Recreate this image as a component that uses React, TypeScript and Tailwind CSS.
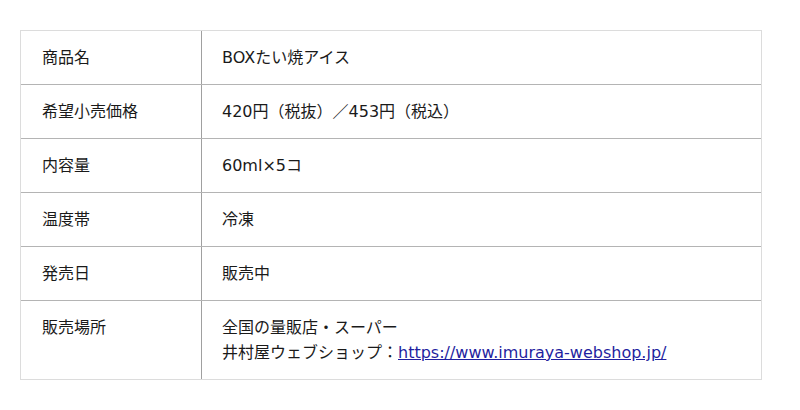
import React from "react";

const rows: { label: string; value: React.ReactNode }[] = [
  { label: "商品名", value: "BOXたい焼アイス" },
  { label: "希望小売価格", value: "420円（税抜）／453円（税込）" },
  { label: "内容量", value: "60ml×5コ" },
  { label: "温度帯", value: "冷凍" },
  { label: "発売日", value: "販売中" },
  {
    label: "販売場所",
    value: (
      <>
        全国の量販店・スーパー
        <br />
        井村屋ウェブショップ：
        <a href="#" className="text-[#1f1fa0] underline">
          https://www.imuraya-webshop.jp/
        </a>
      </>
    ),
  },
];

export default function App() {
  return (
    <div
      className="w-[800px] h-[410px] bg-white pt-[30px] pl-[20px]"
      style={{ fontFamily: '"DejaVu Sans", "Noto Sans CJK JP", sans-serif' }}
    >
      <div className="w-[742px] border border-[#dcdcdc] text-[16px] leading-[25px] text-[#1a1a1a]">
        {rows.map((r, i) => (
          <div
            key={i}
            className={`flex ${i > 0 ? "border-t border-[#b4b4b4]" : ""}`}
          >
            <div className="w-[181px] shrink-0 border-r border-[#a0a0a0] px-[21px] py-[14px]">
              {r.label}
            </div>
            <div className="flex-1 px-[20px] py-[14px]">{r.value}</div>
          </div>
        ))}
      </div>
    </div>
  );
}
